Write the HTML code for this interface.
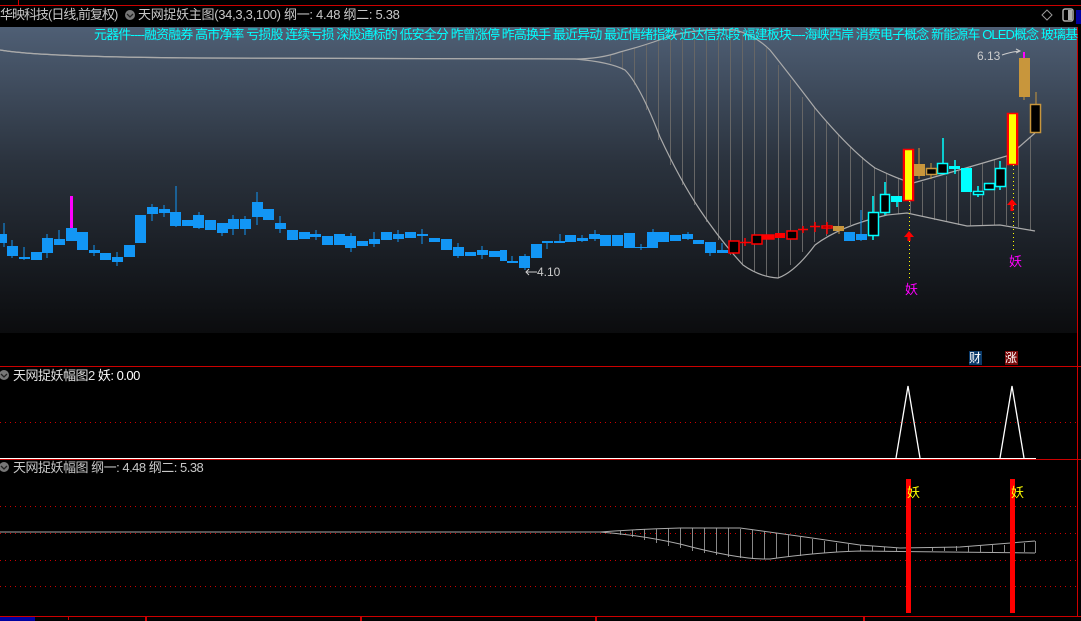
<!DOCTYPE html>
<html><head><meta charset="utf-8"><style>
html,body{margin:0;padding:0;background:#000;width:1081px;height:621px;overflow:hidden;font-family:"Liberation Sans","Noto Sans CJK SC",sans-serif}
.t{position:absolute;white-space:nowrap;font-size:13px;line-height:15px}
</style></head><body>
<svg width="1081" height="621" style="position:absolute;left:0;top:0" xmlns="http://www.w3.org/2000/svg">
<defs><linearGradient id="g" x1="0" y1="0" x2="0" y2="1"><stop offset="0" stop-color="#4f5f75"/><stop offset="0.45" stop-color="#2a323d"/><stop offset="1" stop-color="#0b0c0e"/></linearGradient></defs>
<rect x="0" y="0" width="1081" height="6" fill="#000"/>
<line x1="0" y1="5.5" x2="1081" y2="5.5" stroke="#c00" />
<line x1="18.5" y1="0" x2="18.5" y2="5" stroke="#c00"/>
<rect x="0" y="27" width="1077" height="306" fill="url(#g)"/>
<line x1="1077.5" y1="27" x2="1077.5" y2="616" stroke="#c00"/>
<rect x="1076" y="10" width="5" height="14" fill="#0000a0"/>
<path d="M1047 10 L1052 15 L1047 20 L1042 15 Z" fill="none" stroke="#999"/>
<rect x="1063" y="9" width="10" height="12" rx="2" fill="none" stroke="#aaa" stroke-width="1.5"/><rect x="1068" y="10" width="4" height="10" fill="#aaa"/>
<g stroke="#666" stroke-width="1">
<line x1="610.5" y1="55" x2="610.5" y2="62"/><line x1="622.5" y1="52" x2="622.5" y2="70"/><line x1="634.5" y1="48" x2="634.5" y2="85"/><line x1="646.5" y1="45" x2="646.5" y2="110"/><line x1="658.5" y1="40" x2="658.5" y2="140"/><line x1="670.5" y1="36" x2="670.5" y2="165"/><line x1="682.5" y1="33" x2="682.5" y2="185"/><line x1="694.5" y1="31" x2="694.5" y2="205"/><line x1="706.5" y1="30" x2="706.5" y2="222"/><line x1="718.5" y1="30" x2="718.5" y2="240"/><line x1="730.5" y1="30" x2="730.5" y2="255"/><line x1="742.5" y1="33" x2="742.5" y2="265"/><line x1="754.5" y1="38" x2="754.5" y2="272"/><line x1="766.5" y1="48" x2="766.5" y2="276"/><line x1="778.5" y1="65" x2="778.5" y2="278"/><line x1="790.5" y1="80" x2="790.5" y2="265"/><line x1="802.5" y1="97" x2="802.5" y2="252"/><line x1="814.5" y1="107" x2="814.5" y2="242"/><line x1="826.5" y1="122" x2="826.5" y2="236"/><line x1="838.5" y1="135" x2="838.5" y2="230"/><line x1="850.5" y1="147" x2="850.5" y2="225"/><line x1="862.5" y1="157" x2="862.5" y2="220"/><line x1="874.5" y1="167" x2="874.5" y2="217"/><line x1="886.5" y1="173" x2="886.5" y2="215"/><line x1="898.5" y1="178" x2="898.5" y2="214"/><line x1="910.5" y1="183" x2="910.5" y2="213"/><line x1="922.5" y1="182" x2="922.5" y2="216"/><line x1="934.5" y1="180" x2="934.5" y2="220"/><line x1="946.5" y1="176" x2="946.5" y2="222"/><line x1="958.5" y1="171" x2="958.5" y2="225"/><line x1="970.5" y1="167" x2="970.5" y2="226"/><line x1="982.5" y1="163" x2="982.5" y2="226"/><line x1="994.5" y1="159" x2="994.5" y2="225"/><line x1="1006.5" y1="156" x2="1006.5" y2="225"/><line x1="1018.5" y1="146" x2="1018.5" y2="227"/><line x1="1030.5" y1="137" x2="1030.5" y2="230"/>
</g>
<path d="M0 50 Q40 57 200 58 L575 59 Q600 59 620 52 Q650 44 670 36 Q700 28 735 30 Q755 35 770 50 Q790 75 815 108 Q850 150 875 168 Q900 180 913 183 Q960 170 1010 155 L1035 133" fill="none" stroke="#aaa" stroke-width="1.2"/>
<path d="M0 50 Q40 57 200 58 L575 59 Q610 62 625 70 Q640 85 660 137 Q680 180 700 210 Q720 240 743 265 Q760 277 778 278 Q795 272 815 245 Q840 226 887 215 L907 213 Q930 218 967 226 L1000 225 L1035 231" fill="none" stroke="#aaa" stroke-width="1.2"/>
<g fill="#1296f5" stroke="#1296f5">
<line x1="4" y1="223" x2="4" y2="247"/><rect x="0" y="234" width="7" height="9" stroke="none"/>
<line x1="12" y1="240" x2="12" y2="258"/><rect x="7" y="246" width="11" height="10" stroke="none"/>
<line x1="24" y1="247" x2="24" y2="260"/><rect x="19" y="257" width="11" height="2" stroke="none"/>
<rect x="31" y="252" width="11" height="8" stroke="none"/>
<line x1="47" y1="234" x2="47" y2="258"/><rect x="42" y="238" width="11" height="15" stroke="none"/>
<line x1="59" y1="230" x2="59" y2="245"/><rect x="54" y="239" width="11" height="6" stroke="none"/>
<rect x="66" y="228" width="11" height="13" stroke="none"/>
<rect x="77" y="232" width="11" height="18" stroke="none"/>
<line x1="94" y1="245" x2="94" y2="256"/><rect x="89" y="250" width="11" height="3" stroke="none"/>
<rect x="100" y="253" width="11" height="7" stroke="none"/>
<line x1="117" y1="252" x2="117" y2="266"/><rect x="112" y="257" width="11" height="5" stroke="none"/>
<rect x="124" y="245" width="11" height="12" stroke="none"/>
<rect x="135" y="215" width="11" height="28" stroke="none"/>
<line x1="152" y1="204" x2="152" y2="221"/><rect x="147" y="207" width="11" height="7" stroke="none"/>
<line x1="164" y1="205" x2="164" y2="217"/><rect x="159" y="209" width="11" height="4" stroke="none"/>
<line x1="176" y1="186" x2="176" y2="227"/><rect x="170" y="212" width="11" height="14" stroke="none"/>
<rect x="182" y="220" width="11" height="6" stroke="none"/>
<line x1="199" y1="212" x2="199" y2="229"/><rect x="193" y="215" width="11" height="13" stroke="none"/>
<rect x="205" y="220" width="11" height="10" stroke="none"/>
<line x1="222" y1="225" x2="222" y2="236"/><rect x="217" y="223" width="11" height="10" stroke="none"/>
<line x1="233" y1="215" x2="233" y2="235"/><rect x="228" y="219" width="11" height="10" stroke="none"/>
<line x1="245" y1="216" x2="245" y2="235"/><rect x="240" y="219" width="11" height="10" stroke="none"/>
<line x1="257" y1="192" x2="257" y2="225"/><rect x="252" y="202" width="11" height="15" stroke="none"/>
<rect x="263" y="209" width="11" height="11" stroke="none"/>
<line x1="280" y1="216" x2="280" y2="233"/><rect x="275" y="223" width="11" height="6" stroke="none"/>
<rect x="287" y="230" width="11" height="10" stroke="none"/>
<rect x="299" y="232" width="11" height="7" stroke="none"/>
<line x1="316" y1="230" x2="316" y2="240"/><rect x="310" y="234" width="11" height="3" stroke="none"/>
<rect x="322" y="236" width="11" height="9" stroke="none"/>
<rect x="334" y="234" width="11" height="11" stroke="none"/>
<line x1="351" y1="233" x2="351" y2="252"/><rect x="345" y="236" width="11" height="12" stroke="none"/>
<rect x="357" y="241" width="11" height="5" stroke="none"/>
<line x1="374" y1="232" x2="374" y2="247"/><rect x="369" y="239" width="11" height="5" stroke="none"/>
<rect x="381" y="232" width="11" height="8" stroke="none"/>
<line x1="398" y1="230" x2="398" y2="242"/><rect x="393" y="234" width="11" height="5" stroke="none"/>
<rect x="405" y="232" width="11" height="6" stroke="none"/>
<line x1="422" y1="229" x2="422" y2="244"/><rect x="417" y="234" width="11" height="2" stroke="none"/>
<rect x="429" y="238" width="11" height="4" stroke="none"/>
<rect x="441" y="239" width="11" height="11" stroke="none"/>
<line x1="458" y1="243" x2="458" y2="258"/><rect x="453" y="247" width="11" height="9" stroke="none"/>
<rect x="465" y="252" width="11" height="4" stroke="none"/>
<line x1="482" y1="246" x2="482" y2="259"/><rect x="477" y="250" width="11" height="5" stroke="none"/>
<rect x="489" y="251" width="11" height="6" stroke="none"/>
<rect x="500" y="250" width="7" height="11" stroke="none"/>
<line x1="512" y1="256" x2="512" y2="263"/><rect x="507" y="261" width="11" height="2" stroke="none"/>
<line x1="525" y1="254" x2="525" y2="270"/><rect x="519" y="256" width="11" height="12" stroke="none"/>
<rect x="531" y="244" width="11" height="14" stroke="none"/>
<line x1="547" y1="241" x2="547" y2="249"/><rect x="542" y="241" width="11" height="2" stroke="none"/>
<line x1="560" y1="234" x2="560" y2="243"/><rect x="554" y="241" width="11" height="2" stroke="none"/>
<rect x="565" y="235" width="11" height="7" stroke="none"/>
<line x1="582" y1="235" x2="582" y2="242"/><rect x="577" y="238" width="11" height="3" stroke="none"/>
<line x1="595" y1="230" x2="595" y2="241"/><rect x="589" y="234" width="11" height="5" stroke="none"/>
<rect x="600" y="235" width="11" height="11" stroke="none"/>
<rect x="612" y="235" width="11" height="11" stroke="none"/>
<rect x="624" y="233" width="11" height="15" stroke="none"/>
<line x1="635" y1="247.5" x2="647" y2="247.5"/><line x1="641" y1="244" x2="641" y2="250"/>
<line x1="653" y1="229" x2="653" y2="248"/><rect x="647" y="232" width="11" height="16" stroke="none"/>
<rect x="658" y="232" width="11" height="10" stroke="none"/>
<rect x="670" y="235" width="11" height="6" stroke="none"/>
<line x1="688" y1="232" x2="688" y2="240"/><rect x="682" y="234" width="11" height="5" stroke="none"/>
<rect x="693" y="240" width="11" height="4" stroke="none"/>
<line x1="710" y1="242" x2="710" y2="256"/><rect x="705" y="242" width="11" height="11" stroke="none"/>
<line x1="722" y1="243" x2="722" y2="253"/><rect x="717" y="250" width="11" height="3" stroke="none"/>
<rect x="844" y="232" width="11" height="9" stroke="none"/>
<line x1="861" y1="210" x2="861" y2="241"/><rect x="856" y="234" width="11" height="6" stroke="none"/>
</g>
<rect x="70" y="196" width="3" height="32" fill="#ff00ff"/>
<g fill="none" stroke="#f00" stroke-width="1.5">
<rect x="729" y="241" width="10" height="12" fill="#000"/>
<line x1="740" y1="242.5" x2="751" y2="242.5"/><line x1="745" y1="238" x2="745" y2="246"/>
<rect x="752" y="235" width="10" height="9" fill="#000"/>
<rect x="763" y="235" width="11" height="4" fill="#f00"/>
<rect x="787" y="231" width="10" height="8" fill="#000"/>
<line x1="798" y1="229.5" x2="808" y2="229.5"/><line x1="803" y1="226" x2="803" y2="233"/>
<line x1="810" y1="226.5" x2="820" y2="226.5"/><line x1="815" y1="222" x2="815" y2="232"/>
<rect x="822" y="226" width="10" height="2" fill="#000"/><line x1="827" y1="222" x2="827" y2="234"/>
</g>
<rect x="775" y="233" width="10" height="5" fill="#f00"/>
<rect x="833" y="226" width="11" height="5" fill="#c8963c"/><line x1="839" y1="231" x2="839" y2="234" stroke="#c8963c"/>
<g stroke="#00ffff" stroke-width="1.5" fill="#000">
<line x1="873" y1="196" x2="873" y2="240"/><rect x="868.5" y="212.5" width="10" height="23"/>
<line x1="885" y1="182" x2="885" y2="215"/><rect x="880.5" y="194.5" width="9" height="18"/>
<rect x="891" y="196" width="11" height="6" fill="#00ffff" stroke="none"/><line x1="897" y1="196" x2="897" y2="207"/>
<line x1="943" y1="138" x2="943" y2="172"/><rect x="937.5" y="163.5" width="10" height="10"/>
<rect x="949" y="166" width="11" height="3" fill="#00ffff" stroke="none"/><line x1="955" y1="160" x2="955" y2="174"/>
<rect x="961" y="168" width="11" height="24" fill="#00ffff" stroke="none"/>
<line x1="978" y1="186" x2="978" y2="197"/><rect x="973.5" y="191.5" width="10" height="3"/>
<rect x="984.5" y="183.5" width="10" height="6"/>
<line x1="1000" y1="161" x2="1000" y2="190"/><rect x="995.5" y="168.5" width="10" height="18"/>
</g>
<rect x="903.5" y="149.5" width="10" height="51" fill="#ff0" stroke="#f00" stroke-width="1.5"/>
<rect x="1007.5" y="113.5" width="10" height="51" fill="#ff0" stroke="#f00" stroke-width="1.5"/>
<rect x="903" y="149" width="2" height="52" fill="#f00"/><rect x="912" y="149" width="2" height="52" fill="#f00"/>
<rect x="1007" y="113" width="2" height="52" fill="#f00"/><rect x="1016" y="113" width="2" height="52" fill="#f00"/>
<line x1="919" y1="148" x2="919" y2="179" stroke="#c8963c"/><rect x="914" y="164" width="11" height="12" fill="#c8963c"/>
<line x1="931" y1="163" x2="931" y2="179" stroke="#c8963c"/><rect x="926.5" y="168.5" width="10" height="6" fill="#000" stroke="#c8963c" stroke-width="1.5"/>
<line x1="1024" y1="52" x2="1024" y2="100" stroke="#c8963c"/><rect x="1019" y="58" width="11" height="39" fill="#c8963c"/>
<rect x="1023" y="52" width="2" height="6" fill="#f0f"/>
<line x1="1036" y1="92" x2="1036" y2="105" stroke="#c8963c"/><rect x="1030.5" y="104.5" width="10" height="28" fill="#000" stroke="#c8963c" stroke-width="1.5"/>
<line x1="909.5" y1="201" x2="909.5" y2="278" stroke="#ff0" stroke-dasharray="1,3"/>
<line x1="1013.5" y1="165" x2="1013.5" y2="252" stroke="#ff0" stroke-dasharray="1,3"/>
<path d="M909 231 L904 237 L907.5 237 L907.5 241 L910.5 241 L910.5 237 L914 237 Z" fill="#f00"/>
<path d="M1012 199 L1007 205 L1010.5 205 L1010.5 211 L1013.5 211 L1013.5 205 L1017 205 Z" fill="#f00"/>
<path d="M1002 55 Q1010 52 1020 51" fill="none" stroke="#ccc"/><path d="M1016 49 L1020 51 L1016 53" fill="none" stroke="#ccc"/>
<path d="M537 272 L526 272 M529 269 L526 272 L529 275" stroke="#ccc" fill="none"/>
<line x1="0" y1="366.5" x2="1081" y2="366.5" stroke="#c00"/>
<rect x="969" y="351" width="13" height="14" fill="#0a3a6a"/>
<rect x="1005" y="351" width="13" height="14" fill="#7a0a0a"/>
<line x1="0" y1="422.5" x2="1077" y2="422.5" stroke="#c00" stroke-dasharray="1,4"/>
<line x1="0" y1="458.5" x2="1036" y2="458.5" stroke="#fff"/>
<line x1="0" y1="459.5" x2="1081" y2="459.5" stroke="#c00"/>
<path d="M896 458 L908 386 L920 458 M1000 458 L1012 386 L1024 458" fill="none" stroke="#fff" stroke-width="1.3"/>
<line x1="0" y1="506.5" x2="1077" y2="506.5" stroke="#c00" stroke-dasharray="1,4"/>
<line x1="0" y1="533.5" x2="1077" y2="533.5" stroke="#c00" stroke-dasharray="1,4"/>
<line x1="0" y1="560.5" x2="1077" y2="560.5" stroke="#c00" stroke-dasharray="1,4"/>
<line x1="0" y1="586.5" x2="1077" y2="586.5" stroke="#c00" stroke-dasharray="1,4"/>
<g stroke="#888">
<line x1="620.5" y1="531" x2="620.5" y2="535"/><line x1="632.5" y1="530" x2="632.5" y2="537"/><line x1="644.5" y1="529" x2="644.5" y2="540"/><line x1="656.5" y1="529" x2="656.5" y2="543"/><line x1="668.5" y1="528" x2="668.5" y2="546"/><line x1="680.5" y1="528" x2="680.5" y2="548"/><line x1="692.5" y1="528" x2="692.5" y2="551"/><line x1="704.5" y1="528" x2="704.5" y2="553"/><line x1="716.5" y1="528" x2="716.5" y2="555"/><line x1="728.5" y1="528" x2="728.5" y2="557"/><line x1="740.5" y1="529" x2="740.5" y2="558"/><line x1="752.5" y1="530" x2="752.5" y2="559"/><line x1="764.5" y1="531" x2="764.5" y2="559"/><line x1="776.5" y1="533" x2="776.5" y2="558"/><line x1="788.5" y1="535" x2="788.5" y2="557"/><line x1="800.5" y1="537" x2="800.5" y2="556"/><line x1="812.5" y1="539" x2="812.5" y2="554"/><line x1="824.5" y1="541" x2="824.5" y2="553"/><line x1="836.5" y1="543" x2="836.5" y2="552"/><line x1="848.5" y1="544" x2="848.5" y2="551"/><line x1="860.5" y1="545" x2="860.5" y2="551"/><line x1="872.5" y1="546" x2="872.5" y2="551"/><line x1="884.5" y1="547" x2="884.5" y2="551"/><line x1="896.5" y1="548" x2="896.5" y2="551"/><line x1="932.5" y1="547" x2="932.5" y2="551"/><line x1="944.5" y1="547" x2="944.5" y2="551"/><line x1="956.5" y1="546" x2="956.5" y2="551"/><line x1="968.5" y1="546" x2="968.5" y2="552"/><line x1="980.5" y1="545" x2="980.5" y2="552"/><line x1="992.5" y1="545" x2="992.5" y2="552"/><line x1="1004.5" y1="545" x2="1004.5" y2="552"/><line x1="1024.5" y1="543" x2="1024.5" y2="552"/><line x1="1035.5" y1="541" x2="1035.5" y2="553"/>
</g>
<path d="M0 532 L600 532 Q640 529 680 528 L740 528 Q800 536 860 545 L900 548 L960 547 L1035 541" fill="none" stroke="#aaa"/>
<path d="M600 532 Q640 535 680 544 Q740 560 770 559 Q820 552 860 551 L1035 553" fill="none" stroke="#aaa"/>
<rect x="906" y="479" width="5" height="134" fill="#f00"/>
<rect x="1010" y="479" width="5" height="134" fill="#f00"/>
<line x1="0" y1="616.5" x2="1081" y2="616.5" stroke="#c00"/>
<rect x="0" y="617" width="35" height="4" fill="#0000a0"/>
<g fill="#c00"><rect x="68" y="617" width="1" height="3"/><rect x="145" y="617" width="2" height="4"/><rect x="360" y="617" width="2" height="4"/><rect x="595" y="617" width="2" height="4"/><rect x="863" y="617" width="2" height="4"/></g>
<circle cx="130" cy="15" r="5" fill="#777"/><path d="M127 14 L130 17 L133 14" stroke="#222" fill="none" stroke-width="1.3"/>
<circle cx="4" cy="375" r="5" fill="#777"/><path d="M1 374 L4 377 L7 374" stroke="#222" fill="none" stroke-width="1.3"/>
<circle cx="4" cy="467" r="5" fill="#777"/><path d="M1 466 L4 469 L7 466" stroke="#222" fill="none" stroke-width="1.3"/>
</svg>
<div class="t" style="left:0;top:7px;color:#c8c8c8;letter-spacing:-1px">华映科技(日线,前复权)</div>
<div class="t" style="left:138px;top:7px;color:#c8c8c8;letter-spacing:-0.3px">天网捉妖主图(34,3,3,100) 纲一: 4.48 纲二: 5.38</div>
<div class="t" style="left:94px;top:27px;color:#00ffff;letter-spacing:-0.9px">元器件----融资融券 高市净率 亏损股 连续亏损 深股通标的 低安全分 昨曾涨停 昨高换手 最近异动 最近情绪指数 近达信热段 福建板块----海峡西岸 消费电子概念 新能源车 OLED概念 玻璃基</div>
<div class="t" style="left:537px;top:265px;color:#ccc;font-size:12px">4.10</div>
<div class="t" style="left:977px;top:49px;color:#ccc;font-size:12px">6.13</div>
<div class="t" style="left:905px;top:282px;color:#f0f;font-size:13px">妖</div>
<div class="t" style="left:1009px;top:254px;color:#f0f;font-size:13px">妖</div>
<div class="t" style="left:969px;top:351px;color:#fff;font-size:12px">财</div>
<div class="t" style="left:1005px;top:351px;color:#fff;font-size:12px">涨</div>
<div class="t" style="left:13px;top:368px;color:#e0e0e0;letter-spacing:-0.5px">天网捉妖幅图2 <span style="color:#fff">妖: 0.00</span></div>
<div class="t" style="left:13px;top:460px;color:#c8c8c8;letter-spacing:-0.5px">天网捉妖幅图 纲一: 4.48 纲二: 5.38</div>
<div class="t" style="left:907px;top:485px;color:#ff0">妖</div>
<div class="t" style="left:1011px;top:485px;color:#ff0">妖</div>
</body></html>
